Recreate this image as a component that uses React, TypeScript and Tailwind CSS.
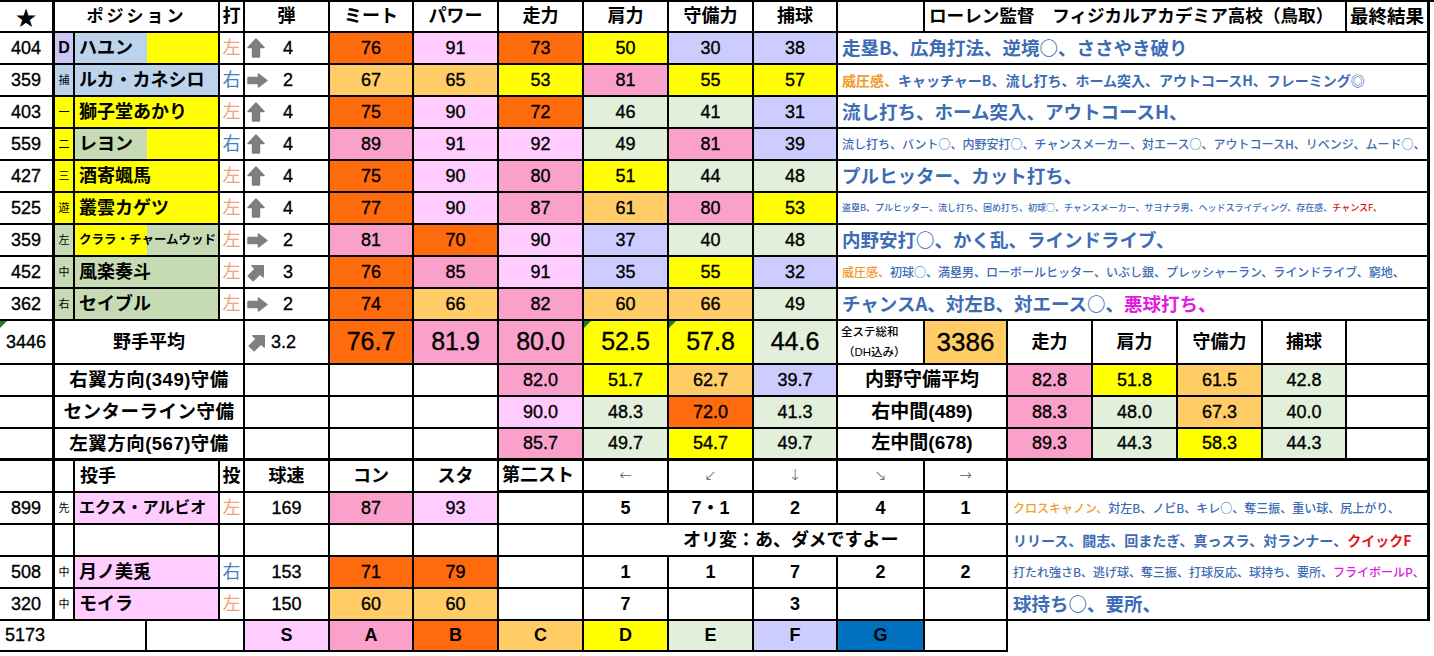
import React from 'react';

const gS = 'bg-[#ffccff]';
const gA = 'bg-[#f9a0cb]';
const gB = 'bg-[#ff6a0d]';
const gC = 'bg-[#ffcc66]';
const gD = 'bg-[#ffff00]';
const gE = 'bg-[#e2efda]';
const gF = 'bg-[#ccccff]';
const gG = 'bg-[#0070c0]';

const NUM = '[-webkit-text-stroke:0.35px_black]';
const JP = "font-['Noto_Sans_CJK_JP',sans-serif]";

function grade(v: number) {
  if (v >= 90) return gS;
  if (v >= 80) return gA;
  if (v >= 70) return gB;
  if (v >= 60) return gC;
  if (v >= 50) return gD;
  if (v >= 40) return gE;
  return gF;
}

type CellProps = { c?: string; r?: string; b?: string; children?: React.ReactNode };
function Cell({ c = '', r = 'border-r-2', b = 'border-b-2', children }: CellProps) {
  return (
    <div className={`flex items-center justify-center overflow-hidden whitespace-nowrap border-black ${r} ${b} ${c}`}>
      {children}
    </div>
  );
}

function Tri() {
  return <span className="absolute left-0 top-0 h-0 w-0 border-t-[7px] border-r-[7px] border-t-[#1f7a2e] border-r-transparent" />;
}

function ArrowUp() {
  return (
    <svg width="18" height="20" viewBox="0 0 18 20">
      <path d="M9 1 L17 9.5 L12.5 9.5 L12.5 19 L5.5 19 L5.5 9.5 L1 9.5 Z" fill="#7f7f7f" stroke="#7f7f7f" strokeWidth="1.4" strokeLinejoin="round" />
    </svg>
  );
}
function ArrowRight() {
  return (
    <svg width="21" height="15" viewBox="0 0 21 15">
      <path d="M20 7.5 L11.5 1 L11.5 4.5 L1 4.5 L1 10.5 L11.5 10.5 L11.5 14 Z" fill="#7f7f7f" stroke="#7f7f7f" strokeWidth="1.4" strokeLinejoin="round" />
    </svg>
  );
}
function ArrowDiag() {
  return (
    <svg width="20" height="20" viewBox="0 0 20 20">
      <g transform="rotate(45 10 10)">
        <path d="M10 1 L18 9.2 L13.5 9.2 L13.5 19 L6.5 19 L6.5 9.2 L2 9.2 Z" fill="#7f7f7f" stroke="#7f7f7f" strokeWidth="1.4" strokeLinejoin="round" />
      </g>
    </svg>
  );
}

const BLUE = 'text-[#3d6cb5]';
const ORANGE = 'text-[#f09a2c]';

type Player = {
  n: number;
  pos: string;
  posBg: string;
  posSize: string;
  name: string;
  nameBg: string;
  nameSize: string;
  hand: '左' | '右';
  arrow: 'up' | 'right' | 'diag';
  dan: number;
  stats: number[];
  skillSize: string;
  skills: React.ReactNode;
};

const players: Player[] = [
  {
    n: 404, pos: 'D', posBg: 'bg-[#cbc6f3]', posSize: 'text-[16px] font-bold', name: 'ハユン',
    nameBg: 'bg-[linear-gradient(to_right,#bcd3ec_72px,#ffff00_72px)]', nameSize: 'text-[18px]', hand: '左', arrow: 'up', dan: 4,
    stats: [76, 91, 73, 50, 30, 38], skillSize: 'text-[18.5px] font-bold',
    skills: <>走塁B、広角打法、逆境○、ささやき破り</>,
  },
  {
    n: 359, pos: '捕', posBg: 'bg-[#bcd3ec]', posSize: 'text-[11px]', name: 'ルカ・カネシロ',
    nameBg: 'bg-[#bcd3ec]', nameSize: 'text-[18px]', hand: '右', arrow: 'right', dan: 2,
    stats: [67, 65, 53, 81, 55, 57], skillSize: 'text-[14px] font-bold',
    skills: <><span className={ORANGE}>威圧感、</span>キャッチャーB、流し打ち、ホーム突入、アウトコースH、フレーミング◎</>,
  },
  {
    n: 403, pos: '一', posBg: 'bg-[#ffff00]', posSize: 'text-[11px]', name: '獅子堂あかり',
    nameBg: 'bg-[#ffff00]', nameSize: 'text-[18px]', hand: '左', arrow: 'up', dan: 4,
    stats: [75, 90, 72, 46, 41, 31], skillSize: 'text-[18.5px] font-bold',
    skills: <>流し打ち、ホーム突入、アウトコースH、</>,
  },
  {
    n: 559, pos: '二', posBg: 'bg-[#ffff00]', posSize: 'text-[11px]', name: 'レヨン',
    nameBg: 'bg-[linear-gradient(to_right,#c6dbb4_72px,#ffff00_72px)]', nameSize: 'text-[18px]', hand: '右', arrow: 'up', dan: 4,
    stats: [89, 91, 92, 49, 81, 39], skillSize: 'text-[12px] font-medium',
    skills: <>流し打ち、バント○、内野安打○、チャンスメーカー、対エース○、アウトコースH、リベンジ、ムード○、</>,
  },
  {
    n: 427, pos: '三', posBg: 'bg-[#ffff00]', posSize: 'text-[11px]', name: '酒寄颯馬',
    nameBg: 'bg-[#ffff00]', nameSize: 'text-[18px]', hand: '左', arrow: 'up', dan: 4,
    stats: [75, 90, 80, 51, 44, 48], skillSize: 'text-[18.5px] font-bold',
    skills: <>プルヒッター、カット打ち、</>,
  },
  {
    n: 525, pos: '遊', posBg: 'bg-[#ffff00]', posSize: 'text-[11px]', name: '叢雲カゲツ',
    nameBg: 'bg-[#ffff00]', nameSize: 'text-[18px]', hand: '左', arrow: 'up', dan: 4,
    stats: [77, 90, 87, 61, 80, 53], skillSize: 'text-[9px] font-medium',
    skills: <>盗塁B、プルヒッター、流し打ち、固め打ち、初球○、チャンスメーカー、サヨナラ男、ヘッドスライディング、存在感、 <span className="text-[#d41414]">チャンスF、</span></>,
  },
  {
    n: 359, pos: '左', posBg: 'bg-[#c6dbb4]', posSize: 'text-[11px]', name: 'クララ・チャームウッド',
    nameBg: 'bg-[linear-gradient(to_right,#ffff00_72px,#c6dbb4_72px)]', nameSize: 'text-[12.5px]', hand: '左', arrow: 'right', dan: 2,
    stats: [81, 70, 90, 37, 40, 48], skillSize: 'text-[18.5px] font-bold',
    skills: <>内野安打○、かく乱、ラインドライブ、</>,
  },
  {
    n: 452, pos: '中', posBg: 'bg-[#c6dbb4]', posSize: 'text-[11px]', name: '風楽奏斗',
    nameBg: 'bg-[#c6dbb4]', nameSize: 'text-[18px]', hand: '左', arrow: 'diag', dan: 3,
    stats: [76, 85, 91, 35, 55, 32], skillSize: 'text-[12px] font-medium',
    skills: <><span className={ORANGE}>威圧感、</span>初球○、満塁男、ローボールヒッター、いぶし銀、プレッシャーラン、ラインドライブ、窮地、</>,
  },
  {
    n: 362, pos: '右', posBg: 'bg-[#c6dbb4]', posSize: 'text-[11px]', name: 'セイブル',
    nameBg: 'bg-[#c6dbb4]', nameSize: 'text-[18px]', hand: '左', arrow: 'right', dan: 2,
    stats: [74, 66, 82, 60, 66, 49], skillSize: 'text-[18.5px] font-bold',
    skills: <>チャンスA、対左B、対エース○、<span className="text-[#e01ce0]">悪球打ち、</span></>,
  },
];

function Hand({ h }: { h: '左' | '右' }) {
  return <span className={h === '左' ? 'text-[#f3a07c]' : 'text-[#4a7dbd]'}>{h}</span>;
}

function Arrow({ a }: { a: 'up' | 'right' | 'diag' }) {
  if (a === 'up') return <ArrowUp />;
  if (a === 'right') return <ArrowRight />;
  return <ArrowDiag />;
}

const defense = [
  { label: '右翼方向(349)守備', vals: [82.0, 51.7, 62.7, 39.7], label2: '内野守備平均', vals2: [82.8, 51.8, 61.5, 42.8] },
  { label: 'センターライン守備', vals: [90.0, 48.3, 72.0, 41.3], label2: '右中間(489)', vals2: [88.3, 48.0, 67.3, 40.0] },
  { label: '左翼方向(567)守備', vals: [85.7, 49.7, 54.7, 49.7], label2: '左中間(678)', vals2: [89.3, 44.3, 58.3, 44.3] },
];

type Pitcher = {
  n: string;
  role: string;
  name: string;
  nameSize: string;
  hand: '左' | '右' | '';
  speed: string;
  con?: number;
  sta?: number;
  dirs: string[];
  skillSize: string;
  skills: React.ReactNode;
};

const pitchers: Pitcher[] = [
  {
    n: '899', role: '先', name: 'エクス・アルビオ', nameSize: 'text-[16px]', hand: '左', speed: '169', con: 87, sta: 93,
    dirs: ['5', '7・1', '2', '4', '1'], skillSize: 'text-[12px] font-medium',
    skills: <><span className="text-[#f0a030]">クロスキャノン、</span>対左B、ノビB、キレ○、奪三振、重い球、尻上がり、</>,
  },
  {
    n: '', role: '', name: '', nameSize: '', hand: '', speed: '',
    dirs: [], skillSize: 'text-[14px] font-bold',
    skills: <>リリース、闘志、回またぎ、真っスラ、対ランナー、<span className="text-[#e01818]">クイックF</span></>,
  },
  {
    n: '508', role: '中', name: '月ノ美兎', nameSize: 'text-[18px]', hand: '右', speed: '153', con: 71, sta: 79,
    dirs: ['1', '1', '7', '2', '2'], skillSize: 'text-[12px] font-medium',
    skills: <>打たれ強さB、逃げ球、奪三振、打球反応、球持ち、要所、<span className="text-[#e01ce0]">フライボールP、</span></>,
  },
  {
    n: '320', role: '中', name: 'モイラ', nameSize: 'text-[18px]', hand: '左', speed: '150', con: 60, sta: 60,
    dirs: ['7', '', '3', '', ''], skillSize: 'text-[18.5px] font-bold',
    skills: <>球持ち○、要所、</>,
  },
];

export default function App() {
  return (
    <div className="h-[656px] w-[1434px] overflow-hidden bg-white font-['Liberation_Sans','Noto_Sans_CJK_JP',sans-serif] text-black">
      <div className="grid grid-cols-[55px_20px_72px_73px_25px_85px_84px_85px_85px_85px_85px_84px_87px_83px_85px_85px_85px_84px_83px] grid-rows-[31px_repeat(9,32px)_44px_repeat(3,32px)_32px_repeat(4,32px)_31px] border-t-2 border-black">
        {/* header */}
        <Cell r="border-r-[3px]" c={`text-[21px] ${JP}`}>★</Cell>
        <Cell c="col-span-3 text-[17px] font-bold tracking-[3px]">ポジション</Cell>
        <Cell c="text-[18px] font-bold">打</Cell>
        <Cell c="text-[18px] font-bold">弾</Cell>
        {['ミート', 'パワー', '走力', '肩力', '守備力', '捕球'].map((t) => (
          <Cell key={t} c="text-[18px] font-bold">{t}</Cell>
        ))}
        <Cell />
        <Cell c="col-span-5 justify-start pl-[4px] text-[17.6px] font-bold">ローレン監督　フィジカルアカデミア高校（鳥取）</Cell>
        <Cell r="border-r-[3px]" c="justify-start pl-[3px] text-[18.5px] font-bold">最終結果</Cell>

        {/* players */}
        {players.map((p, i) => (
          <React.Fragment key={i}>
            <Cell r="border-r-[3px]" c={`text-[18px] ${NUM}`}>{p.n}</Cell>
            <Cell c={`${p.posBg} ${p.posSize}`}>{p.pos}</Cell>
            <Cell c={`col-span-2 justify-start pl-[4px] font-bold ${p.nameBg} ${p.nameSize}`}>{p.name}</Cell>
            <Cell c="text-[18px]"><Hand h={p.hand} /></Cell>
            <Cell c="justify-start">
              <span className="flex w-[25px] items-center justify-start pl-[2px]"><Arrow a={p.arrow} /></span>
              <span className={`ml-[13px] text-[18px] ${NUM}`}>{p.dan}</span>
            </Cell>
            {p.stats.map((s, j) => (
              <Cell key={j} c={`text-[18px] ${NUM} ${grade(s)}`}>{s}</Cell>
            ))}
            <Cell r="border-r-[3px]" c={`col-span-7 justify-start pl-[4px] ${JP} ${BLUE} ${p.skillSize}`}>{p.skills}</Cell>
          </React.Fragment>
        ))}

        {/* averages */}
        <Cell r="border-r-[3px]" c={`relative text-[18px] ${NUM}`}><Tri />3446</Cell>
        <Cell c="col-span-4 text-[18px] font-bold">野手平均</Cell>
        <Cell c="justify-start">
          <span className="flex w-[25px] items-center justify-start pl-[3px]"><ArrowDiag /></span>
          <span className={`ml-[1px] text-[18px] ${NUM}`}>3.2</span>
        </Cell>
        <Cell c={`text-[25px] ${NUM} ${gB}`}>76.7</Cell>
        <Cell c={`text-[25px] ${NUM} ${gA}`}>81.9</Cell>
        <Cell c={`text-[25px] ${NUM} ${gA}`}>80.0</Cell>
        <Cell c={`relative text-[25px] ${NUM} ${gD}`}><Tri />52.5</Cell>
        <Cell c={`relative text-[25px] ${NUM} ${gD}`}><Tri />57.8</Cell>
        <Cell c={`text-[25px] ${NUM} ${gE}`}>44.6</Cell>
        <Cell c="flex-col items-start justify-center pl-[3px] text-[11.5px] font-medium leading-[20px]">
          <span>全ステ総和</span>
          <span className="pl-[2px]">（DH込み）</span>
        </Cell>
        <Cell c={`text-[26px] ${NUM} ${gC}`}>3386</Cell>
        {['走力', '肩力', '守備力', '捕球'].map((t) => (
          <Cell key={t} c="text-[18px] font-bold">{t}</Cell>
        ))}
        <Cell r="border-r-[3px]" />

        {/* defense rows */}
        {defense.map((d, i) => {
          const bb = i === 2 ? 'border-b-[3px]' : 'border-b-2';
          return (
            <React.Fragment key={i}>
              <Cell r="border-r-[3px]" b={bb} />
              <Cell b={bb} c="col-span-4 text-[18.5px] font-bold tracking-[0.5px]">{d.label}</Cell>
              <Cell b={bb} />
              <Cell b={bb} />
              <Cell b={bb} />
              {d.vals.map((v, j) => (
                <Cell key={j} b={bb} c={`text-[18px] ${NUM} ${grade(v)}`}>{v.toFixed(1)}</Cell>
              ))}
              <Cell b={bb} c="col-span-2 text-[19px] font-bold">{d.label2}</Cell>
              {d.vals2.map((v, j) => (
                <Cell key={j} b={bb} c={`text-[18px] ${NUM} ${grade(v)}`}>{v.toFixed(1)}</Cell>
              ))}
              <Cell r="border-r-[3px]" b={bb} />
            </React.Fragment>
          );
        })}

        {/* pitcher header */}
        <Cell r="border-r-[3px]" />
        <Cell />
        <Cell c="col-span-2 justify-start pl-[5px] text-[18px] font-bold">投手</Cell>
        <Cell c="text-[18px] font-bold">投</Cell>
        <Cell c="text-[18px] font-bold">球速</Cell>
        <Cell c="text-[18px] font-bold">コン</Cell>
        <Cell c="text-[18px] font-bold">スタ</Cell>
        <Cell b="border-b-[3px]" c="justify-start pl-[3px] text-[18px] font-bold">第二スト</Cell>
        {['←', '↙', '↓', '↘', '→'].map((t) => (
          <Cell key={t} b="border-b-[3px]" c="font-['DejaVu_Sans',sans-serif] text-[15px] font-light text-[#555]">{t}</Cell>
        ))}
        <Cell r="border-r-[3px]" b="border-b-[3px]" c="col-span-5" />

        {/* pitchers */}
        {pitchers.map((p, i) => (
          <React.Fragment key={i}>
            <Cell r="border-r-[3px]" c={`text-[18px] ${NUM}`}>{p.n}</Cell>
            <Cell c="text-[11px]">{p.role}</Cell>
            <Cell c={`col-span-2 justify-start pl-[4px] font-bold ${p.name ? 'bg-[#ffccff]' : ''} ${p.nameSize}`}>{p.name}</Cell>
            <Cell c="text-[18px]">{p.hand ? <Hand h={p.hand} /> : null}</Cell>
            <Cell c={`text-[18px] ${NUM}`}>{p.speed}</Cell>
            <Cell c={`text-[18px] ${NUM} ${p.con ? grade(p.con) : ''}`}>{p.con ?? ''}</Cell>
            <Cell c={`text-[18px] ${NUM} ${p.sta ? grade(p.sta) : ''}`}>{p.sta ?? ''}</Cell>
            <Cell />
            {p.dirs.length ? (
              p.dirs.map((d, j) => (
                <Cell key={j} c="text-[18px] font-bold">{d}</Cell>
              ))
            ) : (
              <>
                <Cell c="col-span-4 justify-start pl-[99px] text-[18px] font-bold">オリ変：あ、ダメですよー</Cell>
                <Cell />
              </>
            )}
            <Cell r="border-r-[3px]" c={`col-span-5 justify-start pl-[5px] ${JP} ${BLUE} ${p.skillSize}`}>{p.skills}</Cell>
          </React.Fragment>
        ))}

        {/* legend */}
        <Cell c={`col-span-3 justify-start pl-[5px] text-[18px] ${NUM}`}>5173</Cell>
        <Cell c="col-span-2" />
        <Cell c={`text-[18px] font-bold ${gS}`}>S</Cell>
        <Cell c={`text-[18px] font-bold ${gA}`}>A</Cell>
        <Cell c={`text-[18px] font-bold ${gB}`}>B</Cell>
        <Cell c={`text-[18px] font-bold ${gC}`}>C</Cell>
        <Cell c={`text-[18px] font-bold ${gD}`}>D</Cell>
        <Cell c={`text-[18px] font-bold ${gE}`}>E</Cell>
        <Cell c={`text-[18px] font-bold ${gF}`}>F</Cell>
        <Cell c={`text-[18px] font-bold ${gG}`}>G</Cell>
        <Cell />
        <div className="col-span-5" />
      </div>
    </div>
  );
}
